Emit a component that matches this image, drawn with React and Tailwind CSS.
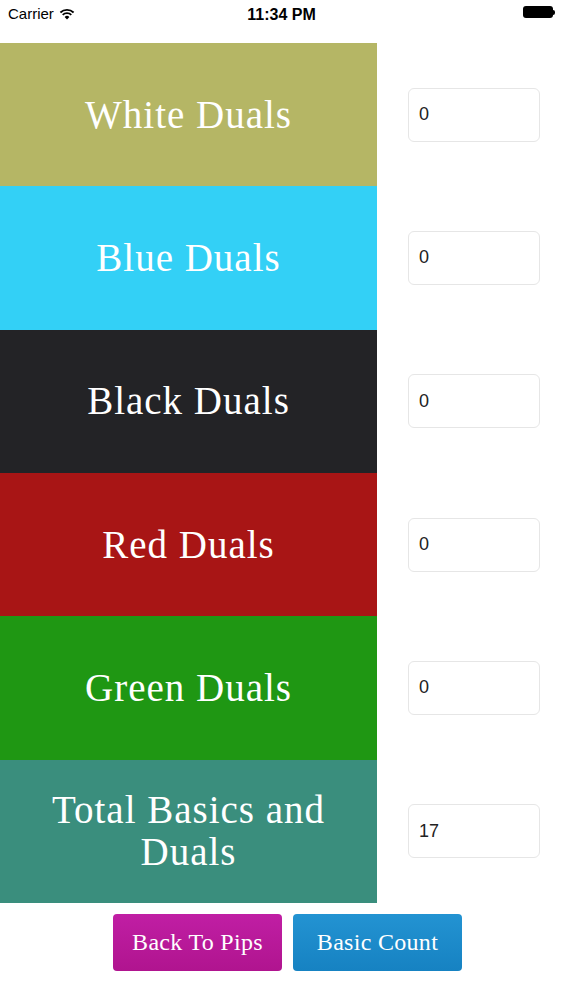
// App.jsx
const ROWS = [
    { label: "White Duals", bg: "bg-[#b5b665]", value: "0" },
    { label: "Blue Duals", bg: "bg-[#33d0f6]", value: "0" },
    { label: "Black Duals", bg: "bg-[#232326]", value: "0" },
    { label: "Red Duals", bg: "bg-[#a81515]", value: "0" },
    { label: "Green Duals", bg: "bg-[#1f9713]", value: "0" },
    { label: "Total Basics and Duals", bg: "bg-[#3a8e7d]", value: "17" },
];

function StatusBar() {
    return (
        <div className="relative h-[43px] flex items-start pt-[3px] px-[8px] text-[15px] text-black font-['Liberation_Sans',sans-serif]">
            <div className="flex items-center gap-[5px]">
                <span>Carrier</span>
                <svg width="16" height="12" viewBox="0 0 16 12">
                    <path d="M8 11.5 L5.6 8.9 A3.4 3.4 0 0 1 10.4 8.9 Z" fill="#000" />
                    <path d="M3.7 6.9 A6.2 6.2 0 0 1 12.3 6.9" stroke="#000" strokeWidth="1.8" fill="none" />
                    <path d="M1.4 4.5 A9.4 9.4 0 0 1 14.6 4.5" stroke="#000" strokeWidth="1.8" fill="none" />
                </svg>
            </div>
            <div className="absolute left-0 right-0 top-[3px] text-center font-semibold text-[16px]">11:34 PM</div>
            <div className="ml-auto flex items-center mt-[3px]">
                <div className="w-[30px] h-[12px] rounded-[3px] bg-black" />
                <div className="w-[2px] h-[5px] bg-black rounded-r-sm" />
            </div>
        </div>
    );
}

export default function App() {
    return (
        <div className="w-[563px] h-[1000px] bg-white overflow-hidden">
            <StatusBar />
            <div className="flex flex-col">
                {ROWS.map((r) => (
                    <div key={r.label} className="flex h-[143.33px]">
                        <div className={`w-[377px] ${r.bg} flex items-center justify-center px-4`}>
                            <div className="text-center text-white text-[39px] leading-[42px] tracking-[1px] font-['Liberation_Serif',serif]">
                                {r.label}
                            </div>
                        </div>
                        <div className="flex-1 flex items-center pl-[31px]">
                            <div className="w-[132px] h-[54px] rounded-[6px] border border-[#e6e6e6] flex items-center pl-[10px] text-[18px] text-[#222] font-['Liberation_Sans',sans-serif]">
                                {r.value}
                            </div>
                        </div>
                    </div>
                ))}
            </div>
            <div className="flex justify-start gap-[11px] pl-[113px] pt-[11px]">
                <button className="w-[169px] h-[57px] rounded-[4px] bg-gradient-to-b from-[#c01ea4] to-[#b0148f] text-white text-[24px] font-['Liberation_Serif',serif] tracking-[0.3px]">
                    Back To Pips
                </button>
                <button className="w-[169px] h-[57px] rounded-[4px] bg-gradient-to-b from-[#2393d2] to-[#1682c2] text-white text-[24px] font-['Liberation_Serif',serif] tracking-[0.3px]">
                    Basic Count
                </button>
            </div>
        </div>
    );
}
